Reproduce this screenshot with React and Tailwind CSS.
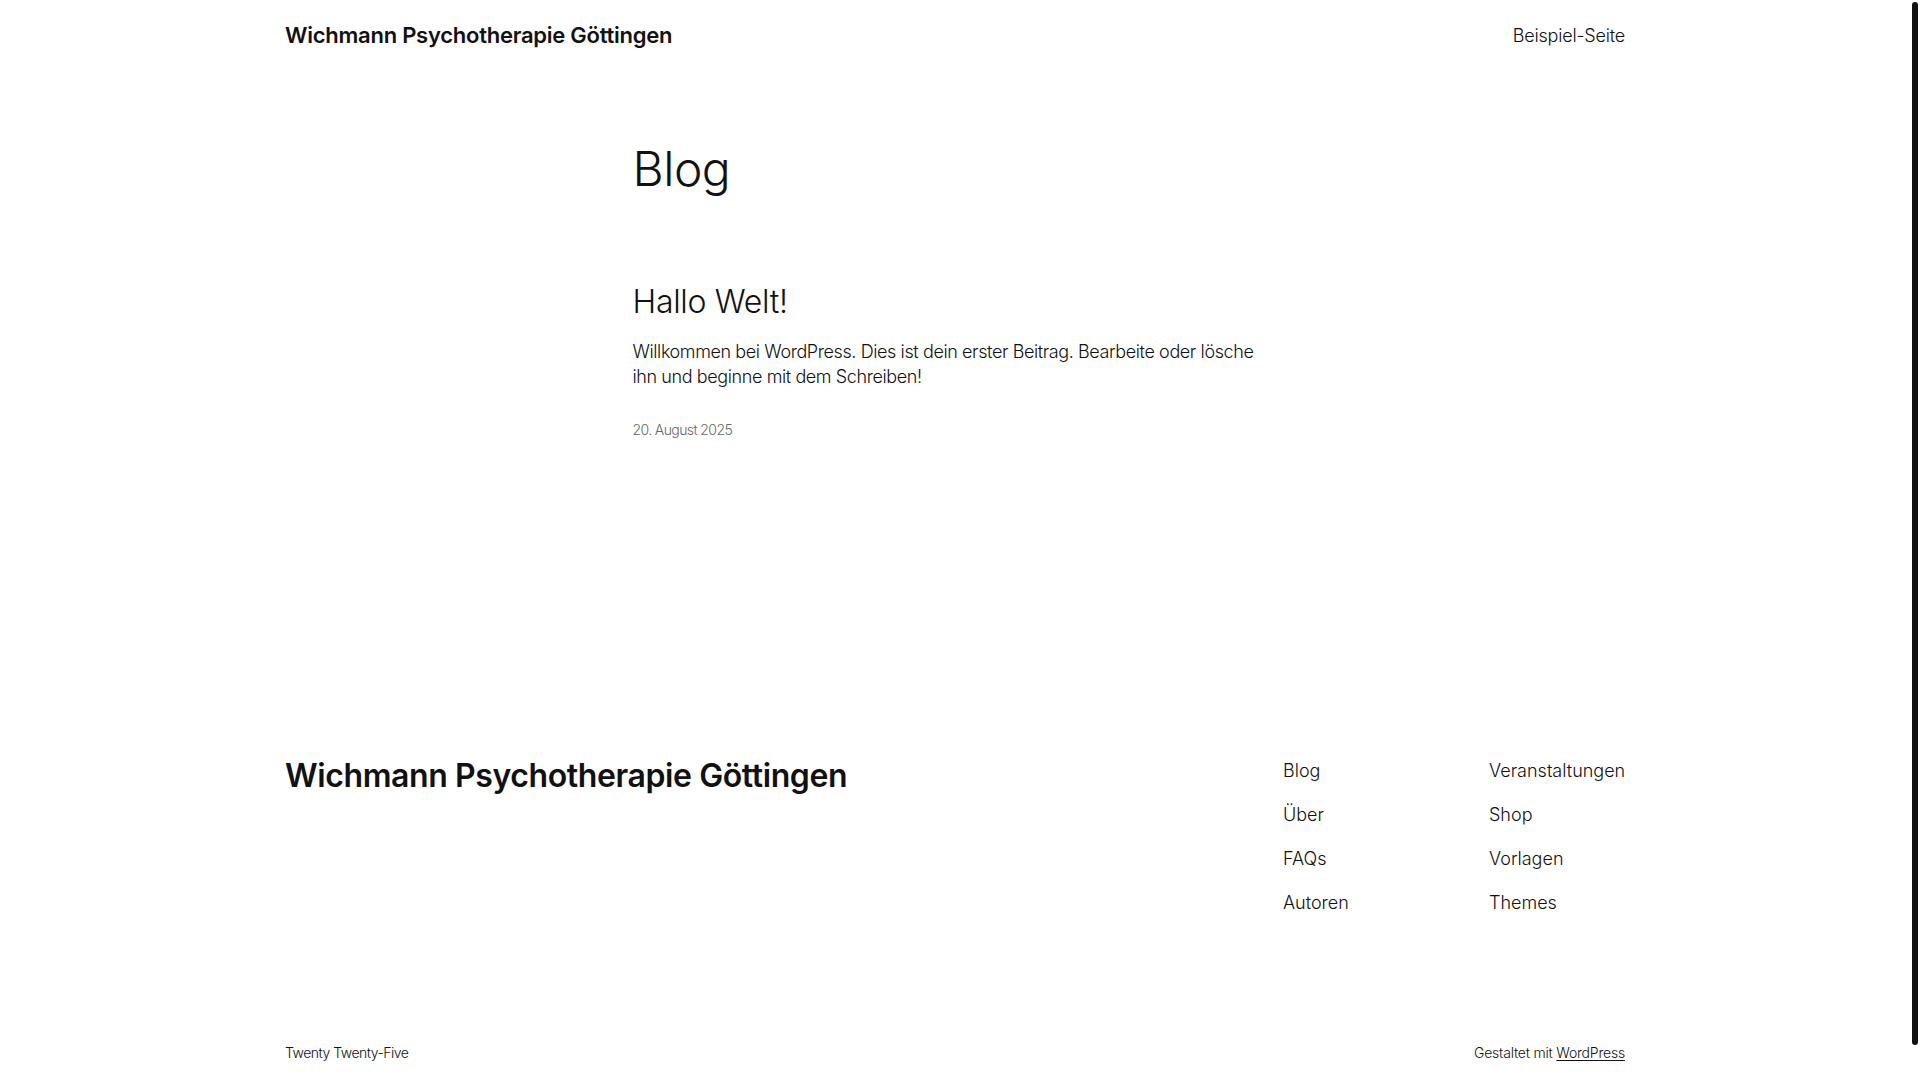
const footerLinks = [
    ['Blog', 'Veranstaltungen'],
    ['Über', 'Shop'],
    ['FAQs', 'Vorlagen'],
    ['Autoren', 'Themes'],
];

export default function App() {
    return (
        <div className="relative h-[1080px] w-full overflow-hidden bg-white text-[#111111] font-['Inter',sans-serif]">
            <div className="flex h-full w-[1910px] flex-col">
                {/* Header */}
                <header className="mx-auto flex w-[1340px] items-center justify-between pt-[20px]">
                    <a className="text-[22px] font-semibold leading-[1.4] tracking-[-0.25px]">
                        Wichmann Psychotherapie Göttingen
                    </a>
                    <nav className="text-[18px] font-light leading-[1.4] tracking-[-0.2px]">Beispiel-Seite</nav>
                </header>

                {/* Content */}
                <main className="mx-auto w-[645px]">
                    <h1 className="mt-[91px] text-[48px] font-light leading-[1.125] tracking-[-0.5px]">Blog</h1>

                    <article>
                        <h2 className="mt-[87px] text-[32px] font-light leading-[1.2] tracking-[-0.3px]">Hallo Welt!</h2>
                        <p className="mt-[18px] text-[18px] font-light leading-[1.4] tracking-[-0.4px]">
                            Willkommen bei WordPress. Dies ist dein erster Beitrag. Bearbeite oder lösche
                            <br />
                            ihn und beginne mit dem Schreiben!
                        </p>
                        <p className="mt-[30px] text-[14px] font-light leading-[1.4] tracking-[-0.6px] text-[#686868]">
                            20. August 2025
                        </p>
                    </article>
                </main>

                {/* Footer */}
                <footer className="mx-auto mt-[318px] w-[1340px]">
                    <div className="flex items-start justify-between">
                        <a className="text-[32px] font-semibold leading-[1.2] tracking-[-0.4px]">
                            Wichmann Psychotherapie Göttingen
                        </a>
                        <div className="flex text-[18px] font-light leading-[25px]">
                            <div className="flex w-[206px] flex-col gap-[19px] pt-px">
                                {footerLinks.map(([left]) => (
                                    <span key={left}>{left}</span>
                                ))}
                            </div>
                            <div className="flex w-[136px] flex-col gap-[19px] whitespace-nowrap pt-px">
                                {footerLinks.map(([, right]) => (
                                    <span key={right}>{right}</span>
                                ))}
                            </div>
                        </div>
                    </div>

                    <div className="mt-[128px] flex items-center justify-between text-[14px] font-light leading-[1.4]">
                        <span className="tracking-[-0.5px]">Twenty Twenty-Five</span>
                        <span className="tracking-[-0.2px]">
                            Gestaltet mit <a className="underline underline-offset-2">WordPress</a>
                        </span>
                    </div>
                </footer>
            </div>

            {/* scrollbar thumb */}
            <div className="absolute right-[2px] top-[2px] h-[1043px] w-[6px] rounded-full bg-[#111111]" />
        </div>
    );
}
